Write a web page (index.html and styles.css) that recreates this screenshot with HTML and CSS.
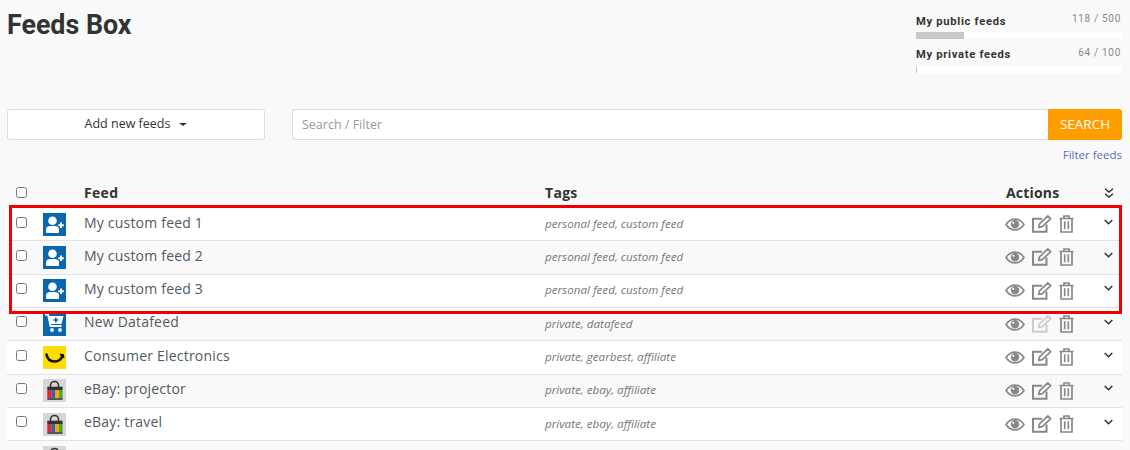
FILE: index.html
```html
<!DOCTYPE html>
<html lang="en">
<head>
<meta charset="utf-8">
<title>Feeds Box</title>
<link rel="stylesheet" href="styles.css">
</head>
<body>
<svg class="defs" width="0" height="0" aria-hidden="true">
  <symbol id="i-user" viewBox="0 0 23 23">
    <rect width="23" height="23" fill="#0b66b0"/>
    <circle cx="9.500" cy="7.800" r="4.300" fill="#fff"/>
    <path d="M3 19v-2.600C3 14 5 13 7.400 13h4.200c2.400 0 4.400 1 4.400 3.400V19q0 1-1 1H4q-1 0-1-1z" fill="#fff"/>
    <path d="M18 9.500v5.500M15.300 12.200h5.500" stroke="#fff" stroke-width="2" fill="none"/>
  </symbol>
  <symbol id="i-cart" viewBox="0 0 23 23">
    <rect width="23" height="23" fill="#0b66b0"/>
    <path d="M2 1.500h3l2.500 11.500h11" stroke="#fff" stroke-width="1.800" fill="none"/>
    <path d="M5 3h15.500l-2 8H7z" fill="#fff"/>
    <circle cx="9" cy="17" r="1.900" fill="#fff"/><circle cx="17" cy="17" r="1.900" fill="#fff"/>
    <path d="M12.800 4.500v5M10.300 7h5" stroke="#0b66b0" stroke-width="1.600" fill="none"/>
  </symbol>
  <symbol id="i-smile" viewBox="0 0 23 23">
    <rect width="23" height="23" fill="#ffdc00"/>
    <path d="M3.500 8.500c1 5 4.500 7 8 7s6.800-2 8-6" stroke="#111" stroke-width="2.600" fill="none" stroke-linecap="round"/>
    <path d="M17 8.500l3 .6.600 3" stroke="#111" stroke-width="1.800" fill="none"/>
  </symbol>
  <symbol id="i-bag" viewBox="0 0 23 23">
    <rect width="23" height="23" fill="#d6d6d6"/>
    <path d="M7.500 8.500V6.500a4 4 0 0 1 8 0V8.500" stroke="#333" stroke-width="1.600" fill="none"/>
    <rect x="4.300" y="7.700" width="15.300" height="3.300" fill="#333"/>
    <rect x="4.300" y="11" width="4.300" height="8.300" fill="#e3262e"/>
    <rect x="8.600" y="11" width="3.400" height="8.300" fill="#2463c4"/>
    <rect x="12" y="11" width="4" height="8.300" fill="#f5a800"/>
    <rect x="16" y="11" width="3.600" height="8.300" fill="#4aa82e"/>
    <rect x="4.300" y="19.300" width="15.300" height="1.500" fill="#333"/>
  </symbol>
  <symbol id="i-eye" viewBox="0 0 20 13">
    <path d="M1 6.500c2.300-3.500 5.400-5.400 9-5.400s6.700 1.900 9 5.400c-2.300 3.500-5.400 5.400-9 5.400S3.300 10 1 6.500z" fill="none" stroke="currentColor" stroke-width="1.700"/>
    <circle cx="10" cy="6.300" r="4.200" fill="currentColor"/>
    <circle cx="8.300" cy="4.800" r="1.100" fill="#fff"/>
  </symbol>
  <symbol id="i-edit" viewBox="0 0 20 18">
    <path d="M14.500 9.500V16.800H1V3.800H10" fill="none" stroke="currentColor" stroke-width="2"/>
    <path d="M6.700 12.300l.8-3.400L15.800 .9l2.900 2.700-8.400 8z" fill="none" stroke="currentColor" stroke-width="1.700" stroke-linejoin="round"/>
  </symbol>
  <symbol id="i-trash" viewBox="0 0 15 18">
    <path d="M.5 3.500h14M5 3.300V1h5v2.300" fill="none" stroke="currentColor" stroke-width="1.700"/>
    <path d="M2 4v13h11V4" fill="none" stroke="currentColor" stroke-width="1.700"/>
    <path d="M5.700 6.300v8M9.300 6.300v8" fill="none" stroke="currentColor" stroke-width="1.600"/>
  </symbol>
  <symbol id="i-down" viewBox="0 0 9 6">
    <path d="M.7 1l3.800 3.700L8.300 1" fill="none" stroke="currentColor" stroke-width="1.500"/>
  </symbol>
  <symbol id="i-double" viewBox="0 0 10 10">
    <path d="M1 .7l4 3.300 4-3.300M1 5.700l4 3.300 4-3.300" fill="none" stroke="currentColor" stroke-width="1.400"/>
  </symbol>
</svg>

<header class="top">
  <h1 class="title">Feeds Box</h1>
  <div class="stats">
    <div class="stat">
      <div class="stat-head"><span class="stat-name first">My public feeds</span><span class="stat-count">118 / 500</span></div>
      <div class="bar"><div class="bar-fill" style="width:23.3%"></div></div>
    </div>
    <div class="stat">
      <div class="stat-head"><span class="stat-name">My private feeds</span><span class="stat-count">64 / 100</span></div>
      <div class="bar"><div class="bar-fill" style="width:1px"></div></div>
    </div>
  </div>
</header>

<div class="toolbar">
  <button class="add-btn" type="button">Add new feeds<span class="caret"></span></button>
  <div class="search">
    <input class="search-input" type="text" placeholder="Search / Filter">
    <button class="search-btn" type="button">SEARCH</button>
  </div>
</div>
<div class="filter-line"><a class="filter-link" href="#">Filter feeds</a></div>

<section class="table">
  <div class="row head">
    <span class="c-check"><input type="checkbox"></span>
    <span class="c-icon"></span>
    <span class="c-name">Feed</span>
    <span class="c-tags">Tags</span>
    <span class="c-actions">Actions</span>
    <span class="c-more"><svg class="i-double"><use href="#i-double"/></svg></span>
  </div>

  <div class="row">
    <span class="c-check"><input type="checkbox"></span>
    <span class="c-icon"><svg class="logo"><use href="#i-user"/></svg></span>
    <span class="c-name">My custom feed 1</span>
    <span class="c-tags">personal feed, custom feed</span>
    <span class="c-actions"><svg class="i-eye"><use href="#i-eye"/></svg><svg class="i-edit"><use href="#i-edit"/></svg><svg class="i-trash"><use href="#i-trash"/></svg></span>
    <span class="c-more"><svg class="i-down"><use href="#i-down"/></svg></span>
  </div>
  <div class="row alt">
    <span class="c-check"><input type="checkbox"></span>
    <span class="c-icon"><svg class="logo"><use href="#i-user"/></svg></span>
    <span class="c-name">My custom feed 2</span>
    <span class="c-tags">personal feed, custom feed</span>
    <span class="c-actions"><svg class="i-eye"><use href="#i-eye"/></svg><svg class="i-edit"><use href="#i-edit"/></svg><svg class="i-trash"><use href="#i-trash"/></svg></span>
    <span class="c-more"><svg class="i-down"><use href="#i-down"/></svg></span>
  </div>
  <div class="row">
    <span class="c-check"><input type="checkbox"></span>
    <span class="c-icon"><svg class="logo"><use href="#i-user"/></svg></span>
    <span class="c-name">My custom feed 3</span>
    <span class="c-tags">personal feed, custom feed</span>
    <span class="c-actions"><svg class="i-eye"><use href="#i-eye"/></svg><svg class="i-edit"><use href="#i-edit"/></svg><svg class="i-trash"><use href="#i-trash"/></svg></span>
    <span class="c-more"><svg class="i-down"><use href="#i-down"/></svg></span>
  </div>
  <div class="row alt">
    <span class="c-check"><input type="checkbox"></span>
    <span class="c-icon"><svg class="logo"><use href="#i-cart"/></svg></span>
    <span class="c-name">New Datafeed</span>
    <span class="c-tags">private, datafeed</span>
    <span class="c-actions"><svg class="i-eye"><use href="#i-eye"/></svg><svg class="i-edit off"><use href="#i-edit"/></svg><svg class="i-trash"><use href="#i-trash"/></svg></span>
    <span class="c-more"><svg class="i-down"><use href="#i-down"/></svg></span>
  </div>
  <div class="row">
    <span class="c-check"><input type="checkbox"></span>
    <span class="c-icon"><svg class="logo"><use href="#i-smile"/></svg></span>
    <span class="c-name">Consumer Electronics</span>
    <span class="c-tags">private, gearbest, affiliate</span>
    <span class="c-actions"><svg class="i-eye"><use href="#i-eye"/></svg><svg class="i-edit"><use href="#i-edit"/></svg><svg class="i-trash"><use href="#i-trash"/></svg></span>
    <span class="c-more"><svg class="i-down"><use href="#i-down"/></svg></span>
  </div>
  <div class="row alt">
    <span class="c-check"><input type="checkbox"></span>
    <span class="c-icon"><svg class="logo"><use href="#i-bag"/></svg></span>
    <span class="c-name">eBay: projector</span>
    <span class="c-tags">private, ebay, affiliate</span>
    <span class="c-actions"><svg class="i-eye"><use href="#i-eye"/></svg><svg class="i-edit"><use href="#i-edit"/></svg><svg class="i-trash"><use href="#i-trash"/></svg></span>
    <span class="c-more"><svg class="i-down"><use href="#i-down"/></svg></span>
  </div>
  <div class="row">
    <span class="c-check"><input type="checkbox"></span>
    <span class="c-icon"><svg class="logo"><use href="#i-bag"/></svg></span>
    <span class="c-name">eBay: travel</span>
    <span class="c-tags">private, ebay, affiliate</span>
    <span class="c-actions"><svg class="i-eye"><use href="#i-eye"/></svg><svg class="i-edit"><use href="#i-edit"/></svg><svg class="i-trash"><use href="#i-trash"/></svg></span>
    <span class="c-more"><svg class="i-down"><use href="#i-down"/></svg></span>
  </div>
  <div class="row alt">
    <span class="c-check"><input type="checkbox"></span>
    <span class="c-icon"><svg class="logo"><use href="#i-bag"/></svg></span>
    <span class="c-name"></span>
    <span class="c-tags"></span>
    <span class="c-actions"></span>
    <span class="c-more"></span>
  </div>

  <div class="highlight"></div>
</section>
</body>
</html>
```

FILE: styles.css
```css
* { box-sizing: border-box; }
html, body { height: 450px; overflow: hidden; }
body {
  margin: 0;
  padding: 0 8px 0 7px;
  background: #f9f9f9;
  color: #333;
  font-family: "Open Sans", sans-serif;
}
.defs { position: absolute; }

.top { display: flex; justify-content: space-between; height: 109px; }
.title {
  margin: 8px 0 0;
  font-family: Roboto, sans-serif;
  font-size: 26.800px;
  line-height: 34px;
  font-weight: 700;
  color: #333;
}
.stats { width: 206px; padding-top: 12px; }
.stat { margin-bottom: 7px; }
.stat-head {
  display: flex;
  justify-content: space-between;
  font-family: Roboto, sans-serif;
  line-height: 18px;
  height: 20px;
  letter-spacing: .7px;
}
.stat-name { font-size: 11.200px; font-weight: 700; color: #333; }
.stat-name.first { padding-top: 1px; }
.stat-count { font-size: 10px; color: #888; line-height: 14px; padding-right: 1px; }
.bar { height: 7px; background: #fff; }
.bar-fill { height: 100%; background: #c8c8c8; }

.toolbar { display: flex; justify-content: space-between; height: 31px; }
.add-btn {
  width: 258px;
  border: 1px solid #ddd;
  border-radius: 3px;
  background: #fff;
  color: #333;
  font: 12.500px "Open Sans", sans-serif;
  padding: 0 0 3px;
}
.caret {
  display: inline-block;
  margin-left: 9px;
  vertical-align: middle;
  border-top: 3.500px solid #333;
  border-left: 4px solid transparent;
  border-right: 4px solid transparent;
}
.search { display: flex; width: 830px; }
.search-input {
  flex: 1;
  min-width: 0;
  height: 31px;
  border: 1px solid #ddd;
  border-right: 0;
  border-radius: 3px 0 0 3px;
  background: #fff;
  padding: 0 9px;
  font: 12.500px "Open Sans", sans-serif;
  color: #333;
}
.search-input::placeholder { color: #999; opacity: 1; }
.search-btn {
  width: 74px;
  height: 31px;
  border: 0;
  border-radius: 0 3px 3px 0;
  background: #ff9c00;
  color: #fff;
  font: 13.500px "Open Sans", sans-serif;
  padding: 0 0 2px;
}
.filter-line { height: 29px; padding-top: 5px; text-align: right; line-height: 16px; }
.filter-link { font-size: 11.500px; color: #5c6bc0; text-decoration: none; }

.table { position: relative; }
.row {
  display: grid;
  grid-template-columns: 36px 41px 461px 460px 98px 19px;
  align-items: center;
  height: 33.330px;
  background: #fff;
  border-bottom: 1px solid #e2e2e2;
  font-size: 14px;
}
.row.alt { background: #f9f9f9; }
.row.head {
  height: 39px;
  background: transparent;
  border-bottom: 0;
  font-weight: 700;
  font-size: 14px;
  padding-top: 8px;
}
.c-check { display: flex; padding-left: 9px; padding-bottom: 4.320px; }
.head .c-check { padding-bottom: 1px; }
.c-check input { width: 11px; height: 11px; margin: 0; }
.c-icon { display: flex; height: 23px; }
.logo { width: 23px; height: 23px; }
.c-name { color: #505a64; letter-spacing: .2px; padding-bottom: 4.320px; }
.head .c-name, .head .c-tags, .head .c-actions { color: #333; font-style: normal; font-size: 14px; letter-spacing: .3px; padding-bottom: 0; }
.head .c-actions { padding-left: 1px; letter-spacing: .2px; }
.c-tags { font-size: 11.650px; font-style: italic; color: #777; padding-bottom: 2px; }
.c-actions { display: flex; align-items: center; color: #888; padding-bottom: 0; }
.i-eye { width: 20px; height: 13px; margin-right: 7px; }
.i-edit { width: 20px; height: 18px; margin-right: 7px; }
.i-edit.off { color: #ccc; }
.i-trash { width: 15px; height: 18px; }
.c-more { display: flex; color: #333; padding-left: 1px; padding-bottom: 5px; }
.head .c-more { padding-bottom: 0; }
.i-down { width: 9px; height: 6px; }
.i-double { width: 10px; height: 10px; }

.highlight {
  position: absolute;
  left: 2px;
  right: 0;
  top: 36px;
  height: 109px;
  border: 3px solid #f00000;
  pointer-events: none;
}
```
